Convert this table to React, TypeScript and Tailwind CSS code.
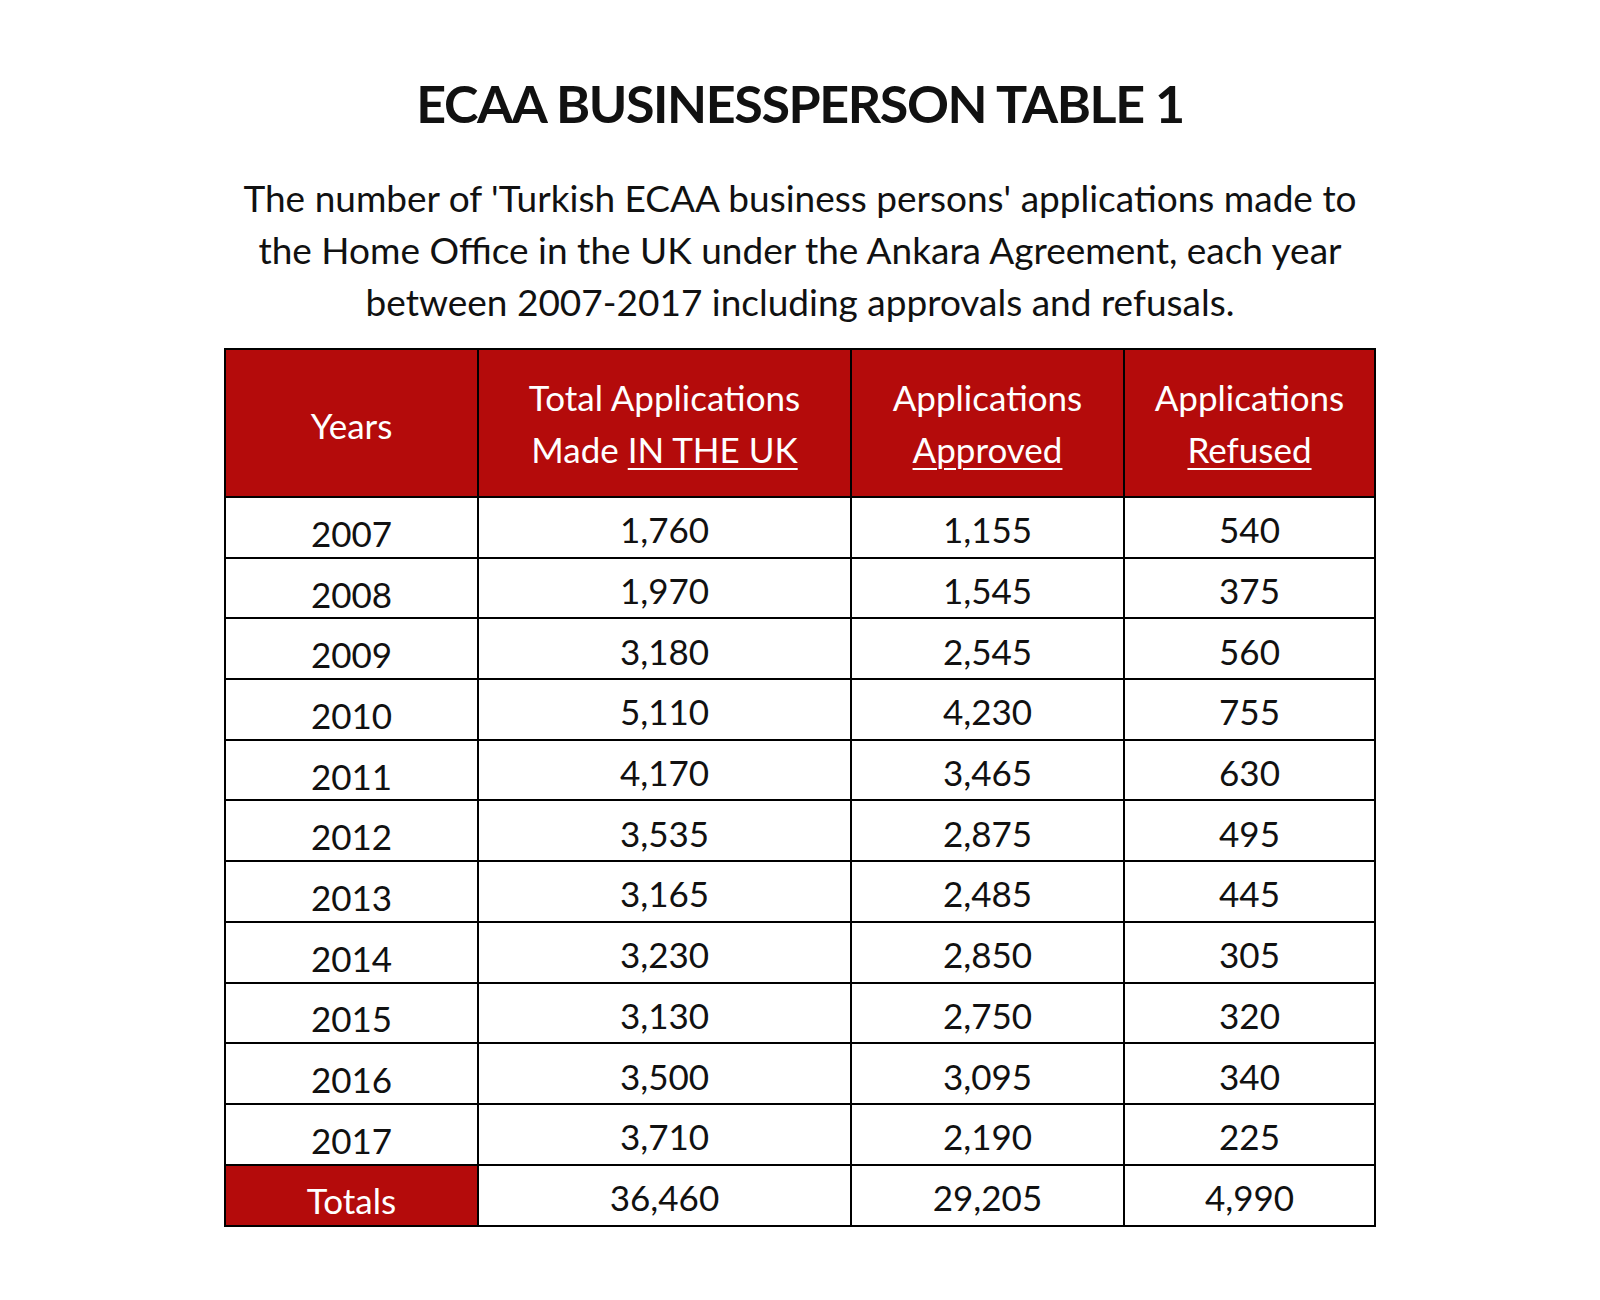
import React from "react";

const rows: [string, string, string, string][] = [
  ["2007", "1,760", "1,155", "540"],
  ["2008", "1,970", "1,545", "375"],
  ["2009", "3,180", "2,545", "560"],
  ["2010", "5,110", "4,230", "755"],
  ["2011", "4,170", "3,465", "630"],
  ["2012", "3,535", "2,875", "495"],
  ["2013", "3,165", "2,485", "445"],
  ["2014", "3,230", "2,850", "305"],
  ["2015", "3,130", "2,750", "320"],
  ["2016", "3,500", "3,095", "340"],
  ["2017", "3,710", "2,190", "225"],
];

export default function App() {
  return (
    <div className="w-[1600px] h-[1300px] bg-white flex flex-col items-center font-['Lato',sans-serif] text-[#111]">
      <h1 className="mt-[73px] text-[52px] font-bold leading-[60px] tracking-[-1.4px] text-center">
        ECAA BUSINESSPERSON TABLE 1
      </h1>
      <p className="mt-[39px] text-[37px] leading-[52px] text-center">
        The number of 'Turkish ECAA business persons' applications made to
        <br />
        the Home Office in the UK under the Ankara Agreement, each year
        <br />
        between 2007-2017 including approvals and refusals.
      </p>
      <table className="mt-[20px] border-collapse table-fixed w-[1150px] text-[35px]">
        <colgroup>
          <col className="w-[253px]" />
          <col className="w-[373px]" />
          <col className="w-[273px]" />
          <col className="w-[251px]" />
        </colgroup>
        <thead>
          <tr className="h-[148px] bg-[#b40b0b] text-white">
            <th className="border-2 border-black font-normal leading-[52px] pt-[4px]">Years</th>
            <th className="border-2 border-black font-normal leading-[52px]">
              Total Applications
              <br />
              Made <span className="underline decoration-2 underline-offset-[5px]">IN THE UK</span>
            </th>
            <th className="border-2 border-black font-normal leading-[52px]">
              Applications
              <br />
              <span className="underline decoration-2 underline-offset-[5px]">Approved</span>
            </th>
            <th className="border-2 border-black font-normal leading-[52px]">
              Applications
              <br />
              <span className="underline decoration-2 underline-offset-[5px]">Refused</span>
            </th>
          </tr>
        </thead>
        <tbody>
          {rows.map((r) => (
            <tr key={r[0]} className="h-[60.7px]">
              <td className="border-2 border-black text-center leading-none pt-[12px]">{r[0]}</td>
              <td className="border-2 border-black text-center leading-none pt-[5px]">{r[1]}</td>
              <td className="border-2 border-black text-center leading-none pt-[5px]">{r[2]}</td>
              <td className="border-2 border-black text-center leading-none pt-[5px]">{r[3]}</td>
            </tr>
          ))}
          <tr className="h-[61px]">
            <td className="border-2 border-black text-center leading-none pt-[10px] bg-[#b40b0b] text-white">
              Totals
            </td>
            <td className="border-2 border-black text-center leading-none pt-[5px]">36,460</td>
            <td className="border-2 border-black text-center leading-none pt-[5px]">29,205</td>
            <td className="border-2 border-black text-center leading-none pt-[5px]">4,990</td>
          </tr>
        </tbody>
      </table>
    </div>
  );
}
